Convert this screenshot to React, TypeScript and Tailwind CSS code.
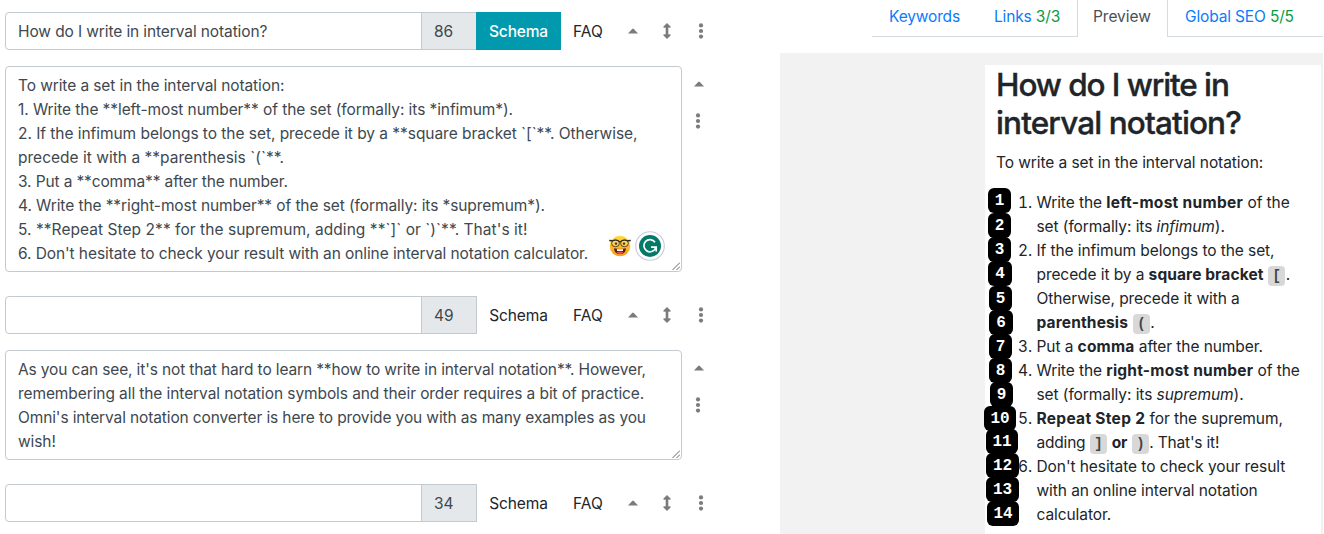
import type { ReactNode } from 'react';

type Line = { text: string; track: string };

const intro: Line[] = [
  { text: 'To write a set in the interval notation:', track: 'tracking-[-0.1px]' },
  { text: '1. Write the **left-most number** of the set (formally: its *infimum*).', track: 'tracking-[-0.08px]' },
  { text: '2. If the infimum belongs to the set, precede it by a **square bracket `[`**. Otherwise,', track: 'tracking-[-0.045px]' },
  { text: 'precede it with a **parenthesis `(`**.', track: 'tracking-[0.02px]' },
  { text: '3. Put a **comma** after the number.', track: 'tracking-[-0.13px]' },
  { text: '4. Write the **right-most number** of the set (formally: its *supremum*).', track: 'tracking-[-0.09px]' },
  { text: "5. **Repeat Step 2** for the supremum, adding **`]` or `)`**. That's it!", track: 'tracking-[0.05px]' },
  { text: "6. Don't hesitate to check your result with an online interval notation calculator.", track: 'tracking-[-0.085px]' },
];

const outro: Line[] = [
  { text: "As you can see, it's not that hard to learn **how to write in interval notation**. However,", track: 'tracking-[-0.135px]' },
  { text: 'remembering all the interval notation symbols and their order requires a bit of practice.', track: 'tracking-[-0.09px]' },
  { text: "Omni's interval notation converter is here to provide you with as many examples as you", track: 'tracking-[-0.12px]' },
  { text: 'wish!', track: 'tracking-[-0.1px]' },
];

function Caret() {
  return (
    <svg className="block h-[6px] w-[10px]" viewBox="0 0 10 6">
      <path d="M0 5.4 4.2.9Q5 .2 5.8.9L10 5.4Z" fill="#7b7b7b" />
    </svg>
  );
}

function UpDown() {
  return (
    <svg className="block h-4 w-2" viewBox="0 0 8 16">
      <path d="M4 .2 7.3 3.5V4.4H5.1v7.2h2.2v.9L4 15.8.7 12.5v-.9h2.2V4.4H.7V3.5Z" fill="#7b7b7b" stroke="#7b7b7b" strokeWidth=".4" strokeLinejoin="round" />
    </svg>
  );
}

function Dots() {
  return (
    <svg className="block h-4 w-[6px]" viewBox="0 0 6 16" fill="#7b7b7b">
      <circle cx="3" cy="2.4" r="2.1" />
      <circle cx="3" cy="8" r="2.1" />
      <circle cx="3" cy="13.6" r="2.1" />
    </svg>
  );
}

function TitleRow({ value, count, active }: { value?: string; count: number; active?: boolean }) {
  return (
    <div className="flex h-[38px] items-center">
      <div className="flex h-full w-[417px] items-center rounded-l border border-[#c3cad0] pt-px pl-3 tracking-[-0.11px]">{value}</div>
      <div className="-ml-px flex h-full w-14 items-center border border-[#c3cad0] bg-[#e4e8eb] pt-px pl-3">{count}</div>
      <div
        className={
          active
            ? '-ml-px flex h-full w-[85px] items-center justify-center bg-[#0099ad] pt-px font-medium tracking-[-0.15px] text-white'
            : '-ml-px flex h-full w-[85px] items-center justify-center pt-px tracking-[-0.1px] text-[#212529]'
        }
      >
        Schema
      </div>
      <div className="w-[67px] pt-px pl-3 text-[#212529]">FAQ</div>
      <div className="w-[35px]"><Caret /></div>
      <div className="w-[35px]"><UpDown /></div>
      <Dots />
    </div>
  );
}

function TextBlock({ lines, children }: { lines: Line[]; children?: ReactNode }) {
  return (
    <div className="flex">
      <div className="relative w-[677px] rounded border border-[#c3cad0] px-3 pt-[7px] pb-[5px]">
        {lines.map((l) => (
          <div key={l.text} className="h-6 leading-6 whitespace-pre">
            <span className={l.track}>{l.text}</span>
          </div>
        ))}
        <svg className="absolute right-px bottom-px size-2" viewBox="0 0 8 8">
          <path d="M.5 8 8 .5M4.5 8 8 4.5" stroke="#555" strokeWidth=".9" fill="none" />
        </svg>
        {children}
      </div>
      <div className="ml-3 flex flex-col items-start pt-[15px]">
        <Caret />
        <div className="mt-[26px] ml-px"><Dots /></div>
      </div>
    </div>
  );
}

function Nerd() {
  return (
    <svg className="size-[22px]" viewBox="0 0 22 22">
      <defs>
        <linearGradient id="face" x1="0" y1="0" x2="0" y2="1">
          <stop offset="0" stopColor="#ffdb3d" />
          <stop offset="1" stopColor="#f89a1c" />
        </linearGradient>
      </defs>
      <circle cx="11" cy="11" r="10.3" fill="url(#face)" />
      <ellipse cx="6.5" cy="8.4" rx="3.9" ry="3.3" fill="#fff3c4" fillOpacity=".3" stroke="#2a2724" strokeWidth=".8" />
      <ellipse cx="15.5" cy="8.4" rx="3.9" ry="3.3" fill="#fff3c4" fillOpacity=".3" stroke="#2a2724" strokeWidth=".8" />
      <path d="M.2 5.6 3.4 5.8M21.8 5.6 18.6 5.8M10 7q1-.8 2 0" stroke="#2a2724" strokeWidth="1.5" fill="none" />
      <path d="M3.2 6Q6.5 4 9.8 6M12.2 6Q15.5 4 18.8 6" stroke="#2a2724" strokeWidth="1.1" fill="none" />
      <circle cx="7" cy="8.6" r="1.2" fill="#4b2a12" />
      <circle cx="15" cy="8.6" r="1.2" fill="#4b2a12" />
      <path d="M5 13.3q6 1.2 12 0-.4 5.8-6 5.8t-6-5.8Z" fill="#57200f" />
      <path d="M8 14.1q3 .4 6 0v2H8Z" fill="#fff" />
      <path d="M7.4 17.6q3.6-2.2 7.2 0-1.4 1.3-3.6 1.3t-3.6-1.3Z" fill="#ef4b5c" />
    </svg>
  );
}

function Grammar() {
  return (
    <svg className="size-[30px]" viewBox="0 0 30 30">
      <circle cx="15" cy="15" r="14.3" fill="#fff" stroke="#c9c9dc" strokeWidth="1.1" />
      <circle cx="15" cy="15" r="11" fill="#037a68" />
      <path d="M20 11.2A6.1 6.1 0 1 0 20.6 17M16 16.2h5.2v4.2" fill="none" stroke="#fff" strokeWidth="1.7" />
    </svg>
  );
}

function Code({ children }: { children: string }) {
  return (
    <code className="mx-[0.5px] inline-flex h-[20px] w-[17px] items-center justify-center rounded bg-[#d8d8d8] align-middle font-['Liberation_Mono'] text-[14px] leading-none font-bold tracking-normal text-[#444]">
      {children}
    </code>
  );
}

const preview: { n?: string; body: ReactNode }[] = [
  { n: '1.', body: <>Write the <b className="tracking-[0.3px]">left-most number</b> of the</> },
  { body: <>set (formally: its <i>infimum</i>).</> },
  { n: '2.', body: 'If the infimum belongs to the set,' },
  { body: <>precede it by a <b className="tracking-[0.1px]">square bracket</b> <Code>[</Code>.</> },
  { body: 'Otherwise, precede it with a' },
  { body: <><b className="tracking-[0.15px]">parenthesis</b> <Code>(</Code>.</> },
  { n: '3.', body: <>Put a <b className="tracking-[0.2px]">comma</b> after the number.</> },
  { n: '4.', body: <>Write the <b className="tracking-[0.23px]">right-most number</b> of the</> },
  { body: <>set (formally: its <i>supremum</i>).</> },
  { n: '5.', body: <><b className="tracking-[0.3px]">Repeat Step 2</b> for the supremum,</> },
  { body: <span className="tracking-[-0.2px]">adding <Code>]</Code> <b>or</b> <Code>)</Code>. That's it!</span> },
  { n: '6.', body: "Don't hesitate to check your result" },
  { body: 'with an online interval notation' },
  { body: 'calculator.' },
];

const badges = [
  'left-[3px] top-[123px] w-[23px]',
  'left-[3px] top-[148px] w-[23px]',
  'left-[3px] top-[172px] w-[23px]',
  'left-[3px] top-[196px] w-[24px]',
  'left-[4px] top-[221px] w-[23px]',
  'left-[4px] top-[245px] w-[24px]',
  'left-[4px] top-[269px] w-[23px]',
  'left-[4px] top-[293px] w-[23px]',
  'left-[5px] top-[317px] w-[23px]',
  'left-[-1px] top-[341px] w-[32px]',
  'left-[1px] top-[364px] w-[32px]',
  'left-[1px] top-[388px] w-[33px]',
  'left-[1px] top-[412px] w-[33px]',
  'left-[2px] top-[436px] w-[32px]',
];

export default function App() {
  return (
    <div className="flex h-[534px] w-[1324px] overflow-hidden bg-white font-['Inter','Liberation_Sans',sans-serif] text-[15.5px] leading-6 text-[#40484f]">
      <main className="flex w-[780px] flex-col pt-3 pl-[5px]">
        <TitleRow value="How do I write in interval notation?" count={86} active />
        <div className="mt-4 mb-6">
          <TextBlock lines={intro}>
            <div className="absolute right-4 bottom-2.5 flex items-center gap-1">
              <Nerd />
              <Grammar />
            </div>
          </TextBlock>
        </div>
        <TitleRow count={49} />
        <div className="mt-4 mb-6"><TextBlock lines={outro} /></div>
        <TitleRow count={34} />
      </main>
      <aside className="flex w-[543px] flex-col">
        <nav className="ml-[92px] flex h-[37px] tracking-[-0.15px] text-[#0b7bfb]">
          <div className="flex w-[205px] border-b border-[#d5dbe1] pt-[5px] pl-[17px]">
            <span className="w-[105px]">Keywords</span>
            <span>Links <span className="text-[#0a9b3f]">3/3</span></span>
          </div>
          <div className="w-[91px] border-x border-[#d5dbe1] pt-[5px] pl-[15px] tracking-[-0.05px] text-[#495057]">Preview</div>
          <div className="grow border-b border-[#d5dbe1] pt-[5px] pl-[17px]">
            Global SEO <span className="text-[#0a9b3f]">5/5</span>
          </div>
        </nav>
        <div className="mt-4 flex grow bg-[#f2f2f2] pt-3 pl-[205px]">
          <article className="relative w-[336px] bg-white pl-3 tracking-[-0.08px] text-[#212529]">
            <h1 className="-ml-px pt-px text-[31.5px] leading-[38px] font-medium whitespace-nowrap [-webkit-text-stroke:0.35px_#212529]">
              <span className="tracking-[-1.08px]">How do I write in</span>
              <br />
              <span className="tracking-[-0.87px]">interval notation?</span>
            </h1>
            <p className="mt-[9px] -ml-px">To write a set in the interval notation:</p>
            <div className="mt-4">
              {preview.map((l, i) => (
                <div key={i} className="flex h-6 whitespace-nowrap">
                  <span className="w-[39.5px] shrink-0 pl-[21px] tabular-nums">{l.n}</span>
                  <span>{l.body}</span>
                </div>
              ))}
            </div>
            {badges.map((pos, i) => (
              <span key={i} className={`absolute flex h-[25px] items-center justify-center rounded-md bg-black font-['Liberation_Mono'] text-[16px] font-bold text-white ${pos}`}>
                {i + 1}
              </span>
            ))}
          </article>
        </div>
      </aside>
    </div>
  );
}
